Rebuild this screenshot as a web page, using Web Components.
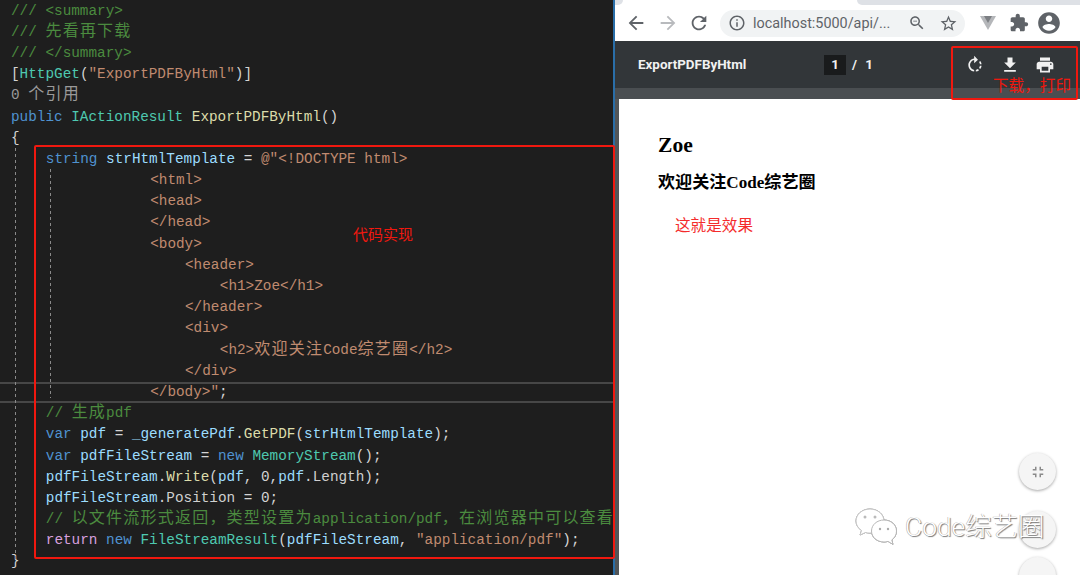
<!DOCTYPE html>
<html lang="zh">
<head>
<meta charset="utf-8">
<title>ExportPDFByHtml</title>
<style>
  html, body { margin: 0; height: 575px; overflow: hidden; background: #1e1e1e; }
</style>
</head>
<body>
<app-window>
  <code-editor slot="left">
    <code-line><c-t k="c">/// &lt;summary&gt;</c-t></code-line>
    <code-line><c-t k="c">/// <c-t k="z">先看再下载</c-t></c-t></code-line>
    <code-line><c-t k="c">/// &lt;/summary&gt;</c-t></code-line>
    <code-line>[<c-t k="t">HttpGet</c-t>(<c-t k="s">"ExportPDFByHtml"</c-t>)]</code-line>
    <code-line><c-t k="g">0 <c-t k="z">个引用</c-t></c-t></code-line>
    <code-line><c-t k="k">public</c-t> <c-t k="t">IActionResult</c-t> <c-t k="m">ExportPDFByHtml</c-t>()</code-line>
    <code-line>{</code-line>
    <code-line indent="4"><c-t k="k">string</c-t> <c-t k="v">strHtmlTemplate</c-t> = <c-t k="s">@"&lt;!DOCTYPE html&gt;</c-t></code-line>
    <code-line indent="16"><c-t k="s">&lt;html&gt;</c-t></code-line>
    <code-line indent="16"><c-t k="s">&lt;head&gt;</c-t></code-line>
    <code-line indent="16"><c-t k="s">&lt;/head&gt;</c-t></code-line>
    <code-line indent="16"><c-t k="s">&lt;body&gt;</c-t></code-line>
    <code-line indent="20"><c-t k="s">&lt;header&gt;</c-t></code-line>
    <code-line indent="24"><c-t k="s">&lt;h1&gt;Zoe&lt;/h1&gt;</c-t></code-line>
    <code-line indent="20"><c-t k="s">&lt;/header&gt;</c-t></code-line>
    <code-line indent="20"><c-t k="s">&lt;div&gt;</c-t></code-line>
    <code-line indent="24"><c-t k="s">&lt;h2&gt;<c-t k="z">欢迎关注</c-t>Code<c-t k="z">综艺圈</c-t>&lt;/h2&gt;</c-t></code-line>
    <code-line indent="20"><c-t k="s">&lt;/div&gt;</c-t></code-line>
    <code-line indent="16" current><c-t k="s">&lt;/body&gt;"</c-t>;</code-line>
    <code-line indent="4"><c-t k="c">// <c-t k="z">生成</c-t>pdf</c-t></code-line>
    <code-line indent="4"><c-t k="k">var</c-t> <c-t k="v">pdf</c-t> = <c-t k="v">_generatePdf</c-t>.<c-t k="m">GetPDF</c-t>(<c-t k="v">strHtmlTemplate</c-t>);</code-line>
    <code-line indent="4"><c-t k="k">var</c-t> <c-t k="v">pdfFileStream</c-t> = <c-t k="k">new</c-t> <c-t k="t">MemoryStream</c-t>();</code-line>
    <code-line indent="4"><c-t k="v">pdfFileStream</c-t>.<c-t k="m">Write</c-t>(<c-t k="v">pdf</c-t>, 0,<c-t k="v">pdf</c-t>.<c-t k="p">Length</c-t>);</code-line>
    <code-line indent="4"><c-t k="v">pdfFileStream</c-t>.<c-t k="p">Position</c-t> = 0;</code-line>
    <code-line indent="4"><c-t k="c">// <c-t k="z">以文件流形式返回，类型设置为</c-t>application/pdf<c-t k="z">，在浏览器中可以查看</c-t></c-t></code-line>
    <code-line indent="4"><c-t k="r">return</c-t> <c-t k="k">new</c-t> <c-t k="t">FileStreamResult</c-t>(<c-t k="v">pdfFileStream</c-t>, <c-t k="s">"application/pdf"</c-t>);</code-line>
    <code-line>}</code-line>
  </code-editor>

  <browser-pane slot="right">
    <browser-toolbar slot="chrome" url="localhost:5000/api/..."></browser-toolbar>
    <pdf-toolbar slot="bar" name="ExportPDFByHtml"></pdf-toolbar>
    <pdf-page slot="page">
      <span slot="h1">Zoe</span>
      <span slot="h2">欢迎关注Code综艺圈</span>
      <span slot="note">这就是效果</span>
    </pdf-page>
  </browser-pane>

  <red-box slot="over" style="left:34px;top:145px;width:581px;height:414px"></red-box>
  <red-note slot="over" style="left:353px;top:224px;font-size:15px">代码实现</red-note>
  <red-box slot="over" style="left:951px;top:46px;width:127px;height:54px"></red-box>
  <red-note slot="over" style="left:993px;top:74px;font-size:15.6px">下载，打印</red-note>
  <wechat-mark slot="over">Code综艺圈</wechat-mark>
</app-window>

<script>
const icons = {
  back: 'M20 11H7.83l5.59-5.59L12 4l-8 8 8 8 1.41-1.41L7.83 13H20v-2z',
  reload: 'M17.65 6.35C16.2 4.9 14.21 4 12 4c-4.42 0-7.99 3.58-7.99 8s3.57 8 7.99 8c3.73 0 6.84-2.55 7.73-6h-2.08c-.82 2.33-3.04 4-5.65 4-3.31 0-6-2.69-6-6s2.69-6 6-6c1.66 0 3.14.69 4.22 1.78L13 11h7V4l-2.35 2.35z',
  info: 'M11 7h2v2h-2zm0 4h2v6h-2zm1-9C6.48 2 2 6.48 2 12s4.48 10 10 10 10-4.48 10-10S17.52 2 12 2zm0 18c-4.41 0-8-3.59-8-8s3.59-8 8-8 8 3.59 8 8-3.59 8-8 8z',
  zoomout: 'M15.5 14h-.79l-.28-.27C15.41 12.59 16 11.11 16 9.5 16 5.91 13.09 3 9.5 3S3 5.91 3 9.5 5.91 16 9.5 16c1.61 0 3.09-.59 4.23-1.57l.27.28v.79l5 4.99L20.49 19l-4.99-5zm-6 0C7.01 14 5 11.99 5 9.5S7.01 5 9.5 5 14 7.01 14 9.5 11.99 14 9.5 14zM7 9h5v1H7z',
  star: 'M22 9.24l-7.19-.62L12 2 9.19 8.63 2 9.24l5.46 4.73L5.82 21 12 17.27 18.18 21l-1.63-7.03L22 9.24zM12 15.4l-3.76 2.27 1-4.28-3.32-2.88 4.38-.38L12 6.1l1.71 4.04 4.38.38-3.32 2.88 1 4.28L12 15.4z',
  puzzle: 'M20.5 11H19V7c0-1.1-.9-2-2-2h-4V3.5C13 2.12 11.88 1 10.5 1S8 2.12 8 3.5V5H4c-1.1 0-1.99.9-1.99 2v3.8H3.5c1.49 0 2.7 1.21 2.7 2.7s-1.21 2.7-2.7 2.7H2V20c0 1.1.9 2 2 2h3.8v-1.5c0-1.49 1.21-2.7 2.7-2.7 1.49 0 2.7 1.21 2.7 2.7V22H17c1.1 0 2-.9 2-2v-4h1.5c1.38 0 2.5-1.12 2.5-2.5S21.88 11 20.5 11z',
  avatar: 'M12 2C6.48 2 2 6.48 2 12s4.48 10 10 10 10-4.48 10-10S17.52 2 12 2zm0 3c1.66 0 3 1.34 3 3s-1.34 3-3 3-3-1.34-3-3 1.34-3 3-3zm0 14.2c-2.5 0-4.71-1.28-6-3.22.03-1.99 4-3.08 6-3.08 1.99 0 5.97 1.09 6 3.08-1.29 1.94-3.5 3.22-6 3.22z',
  rotate: 'M15.55 5.55L11 1v3.07C7.06 4.56 4 7.92 4 12s3.05 7.44 7 7.93v-2.02c-2.84-.48-5-2.94-5-5.91s2.16-5.43 5-5.91V10l4.55-4.45zM19.93 11c-.17-1.39-.72-2.73-1.62-3.89l-1.42 1.42c.54.75.88 1.6 1.02 2.47h2.02zM13 17.9v2.02c1.39-.17 2.74-.71 3.9-1.61l-1.44-1.44c-.75.54-1.59.89-2.46 1.03zm3.89-2.42l1.42 1.41c.9-1.16 1.45-2.5 1.62-3.89h-2.02c-.14.87-.48 1.72-1.02 2.48z',
  download: 'M19 9h-4V3H9v6H5l7 7 7-7zM5 18v2h14v-2H5z',
  print: 'M19 8H5c-1.66 0-3 1.34-3 3v6h4v4h12v-4h4v-6c0-1.66-1.34-3-3-3zm-3 11H8v-5h8v5zm3-7c-.55 0-1-.45-1-1s.45-1 1-1 1 .45 1 1-.45 1-1 1zm-1-9H6v4h12V3z',
  shrink: 'M5 16h3v3h2v-5H5v2zm3-8H5v2h5V5H8v3zm6 11h2v-3h3v-2h-5v5zm2-11V5h-2v5h5V8h-3z',
  minus: 'M6 11h12v2H6z'
};

function icon(name, size, color, extra) {
  return `<svg width="${size}" height="${size}" viewBox="0 0 24 24" fill="${color}" style="display:block;flex:none;${extra || ''}"><path d="${icons[name]}"/></svg>`;
}

class AppWindow extends HTMLElement {
  constructor() {
    super();
    this.attachShadow({ mode: 'open' }).innerHTML = `
      <style>
        :host { display: flex; position: relative; width: 1080px; height: 575px; overflow: hidden; }
        ::slotted([slot=left]) { width: 613px; flex: none; }
        ::slotted([slot=right]) { flex: 1; }
      </style>
      <slot name="left"></slot><slot name="right"></slot><slot name="over"></slot>`;
  }
}

class CodeEditor extends HTMLElement {
  constructor() {
    super();
    this.attachShadow({ mode: 'open' }).innerHTML = `
      <style>
        :host { display: block; position: relative; box-sizing: border-box; height: 575px; padding-top: .6px;
                background: #1e1e1e; color: #d4d4d4;
                font: 14.35px "Liberation Mono", "Noto Sans CJK SC", monospace; overflow: hidden; }
        .guide { position: absolute; width: 1px;
                 background: repeating-linear-gradient(#8a8a8a 0 3px, transparent 3px 6px); }
        .a { left: 15px; top: 148px; height: 412px; }
        .b { left: 50px; top: 169px; height: 229px; }
      </style>
      <slot></slot>
      <div class="guide a"></div><div class="guide b"></div>`;
  }
}

// white-space: pre is inherited into these two shadow roots, so no whitespace between their nodes
class CodeLine extends HTMLElement {
  constructor() {
    super();
    this.attachShadow({ mode: 'open' }).innerHTML = `<style>
        :host { display: block; box-sizing: border-box; height: 21.2px; line-height: 21.2px;
                padding-left: 11px; white-space: pre; }
        :host([current]) { box-shadow: inset 0 2px #474747, inset 0 -2px #474747; }
        .in { display: inline-block; }
      </style><span class="in"></span><slot></slot>`;
  }
  connectedCallback() {
    const n = Number(this.getAttribute('indent') || 0);
    this.shadowRoot.querySelector('.in').style.width = (n * 8.7) + 'px';
  }
}

class CodeToken extends HTMLElement {
  constructor() {
    super();
    this.attachShadow({ mode: 'open' }).innerHTML = `<style>
        :host([k=c]) { color: #4b8b3f; }
        :host([k=s]) { color: #c08b70; }
        :host([k=t]) { color: #4ec9b0; }
        :host([k=k]) { color: #4f92d0; }
        :host([k=v]) { color: #9cdcfe; }
        :host([k=m]) { color: #dcdcaa; }
        :host([k=p]) { color: #d0d0d0; }
        :host([k=r]) { color: #d8a0df; }
        :host([k=g]) { color: #9a9a9a; }
        :host([k=z]) { font-family: "Noto Sans CJK SC", sans-serif; font-size: 16px; letter-spacing: 1.22px; line-height: 0; }
      </style><slot></slot>`;
  }
}

class BrowserPane extends HTMLElement {
  constructor() {
    super();
    this.attachShadow({ mode: 'open' }).innerHTML = `
      <style>
        :host { display: flex; flex-direction: column; height: 575px; box-sizing: border-box;
                border-left: 2px solid #2a6ea8; background: #525659; }
        .strip { height: 11px; background: #4a4e51; }
        ::slotted([slot=page]) { flex: 1; margin-left: 4px; }
      </style>
      <slot name="chrome"></slot>
      <slot name="bar"></slot>
      <div class="strip"></div>
      <slot name="page"></slot>`;
  }
}

class BrowserToolbar extends HTMLElement {
  constructor() {
    super();
    this.attachShadow({ mode: 'open' });
  }
  connectedCallback() {
    this.shadowRoot.innerHTML = `
      <style>
        :host { display: block; background: #fff; font: 14.4px Roboto, sans-serif; color: #5f6368; }
        .tabs { display: flex; height: 5px; background: #fff; }
        .corner { width: 8px; background: #dee1e6; border-bottom-right-radius: 6px; }
        .tab { width: 234px; }
        .rest { flex: 1; background: #dee1e6; border-bottom-left-radius: 6px; }
        .row { display: flex; align-items: center; height: 36px; padding-left: 11px; gap: 12px; }
        .pill { display: flex; align-items: center; box-sizing: border-box; width: 245px; height: 27px;
                margin-left: -2px; padding-left: 8px; border-radius: 14px; background: #f1f3f4; }
        .url { margin-left: 7px; width: 150px; white-space: nowrap; }
        .v { margin-left: 3px; }
      </style>
      <div class="tabs"><div class="corner"></div><div class="tab"></div><div class="rest"></div></div>
      <div class="row">
        ${icon('back', 22, '#5f6368', 'margin-left:-1px')}
        ${icon('back', 22, '#b8babd', 'transform:scaleX(-1);margin-left:-2px')}
        ${icon('reload', 22, '#5f6368', 'margin-left:-3px')}
        <div class="pill">
          ${icon('info', 18, '#5f6368')}
          <span class="url">${this.getAttribute('url')}</span>
          ${icon('zoomout', 18, '#5f6368', 'margin-left:5px')}
          ${icon('star', 19, '#5f6368', 'margin-left:13px')}
        </div>
        <svg class="v" width="16" height="14" viewBox="0 0 16 14" style="display:block;flex:none">
          <path d="M0 0h16L8 14z" fill="#b5b7ba"/><path d="M4 0h8L8 7z" fill="#7c7f83"/>
        </svg>
        ${icon('puzzle', 20, '#5f6368', 'margin-left:1px')}
        ${icon('avatar', 26, '#5f6368', 'margin-left:-5px')}
      </div>`;
  }
}

class PdfToolbar extends HTMLElement {
  constructor() {
    super();
    this.attachShadow({ mode: 'open' });
  }
  connectedCallback() {
    this.shadowRoot.innerHTML = `
      <style>
        :host { display: flex; align-items: center; height: 47px; box-sizing: border-box; padding-left: 23px;
                background: #323639; color: #f1f1f1; font: 700 13.4px Roboto, sans-serif; }
        .name { width: 186px; }
        .num { width: 22px; height: 20px; line-height: 20px; text-align: center; background: #191b1c; }
        .of { margin-left: 6px; word-spacing: 5px; }
        .tools { display: flex; gap: 15px; margin-left: auto; margin-right: 25px; }
      </style>
      <span class="name">${this.getAttribute('name')}</span>
      <span class="num">1</span>
      <span class="of">/ 1</span>
      <span class="tools">
        ${icon('rotate', 20, '#f1f1f1')}
        ${icon('download', 20, '#f1f1f1')}
        ${icon('print', 20, '#f1f1f1')}
      </span>`;
  }
}

class PdfPage extends HTMLElement {
  constructor() {
    super();
    this.attachShadow({ mode: 'open' }).innerHTML = `
      <style>
        :host { display: block; position: relative; background: #fff; color: #000; padding: 33px 0 0 39px;
                font-family: "Liberation Serif", "Noto Sans CJK SC", serif; }
        .h1 { font-size: 21.6px; font-weight: 700; line-height: 26px; }
        .h2 { margin-top: 13px; font-size: 17.1px; font-weight: 700; line-height: 24px; }
        .note { margin: 17px 0 0 17px; font: 15.6px/24px "Noto Sans CJK SC", sans-serif; color: #f42c2c; }
        .fabs { position: absolute; left: 400px; top: 354px; display: flex; flex-direction: column; }
        .fab { display: flex; align-items: center; justify-content: center; width: 37px; height: 37px;
               border-radius: 50%; background: #f5f5f5; box-shadow: 0 1px 3px rgba(0,0,0,.35); }
        .f2 { margin-top: 21px; }
        .f3 { margin-top: 9px; }
      </style>
      <div class="h1"><slot name="h1"></slot></div>
      <div class="h2"><slot name="h2"></slot></div>
      <div class="note"><slot name="note"></slot></div>
      <div class="fabs">
        <div class="fab">${icon('shrink', 18, '#8a8a8a')}</div>
        <div class="fab f2"></div>
        <div class="fab f3">${icon('minus', 18, '#8a8a8a')}</div>
      </div>`;
  }
}

class RedBox extends HTMLElement {
  constructor() {
    super();
    this.attachShadow({ mode: 'open' }).innerHTML = `
      <style>
        :host { display: block; position: absolute; box-sizing: border-box; border: 2.5px solid #f0180f; border-radius: 2px; }
      </style>`;
  }
}

class RedNote extends HTMLElement {
  constructor() {
    super();
    this.attachShadow({ mode: 'open' }).innerHTML = `
      <style>
        :host { display: block; position: absolute; color: #f0180f; line-height: 20px; white-space: nowrap;
                font-family: "Noto Sans CJK SC", sans-serif; }
      </style>
      <slot></slot>`;
  }
}

class WechatMark extends HTMLElement {
  constructor() {
    super();
    this.attachShadow({ mode: 'open' }).innerHTML = `
      <style>
        :host { display: flex; align-items: center; gap: 8px; position: absolute; left: 855px; top: 507px; height: 40px;
                font: 300 26.4px Roboto, "Noto Sans CJK SC", sans-serif; color: #fff; white-space: nowrap;
                text-shadow: 1px 1px 1px #777, -.5px 0 .5px #aaa; }
        svg { display: block; filter: drop-shadow(.5px .5px .5px #888); }
        span { margin-top: -5px; }
      </style>
      <svg width="42" height="38" viewBox="0 0 42 38">
        <path d="M15 1C7 1 1 6.500 1 13c0 4 2.200 7.200 5.500 9.500L5 27l5.500-2.500c1.500.4 3 .6 4.500.6 8 0 14-5.500 14-12S23 1 15 1z" fill="#fff" stroke="#c8c8c8"/>
        <path d="M29 12c-7 0-12.500 4.800-12.500 11S22 34 29 34c1.300 0 2.700-.2 4-.6l5 3-1.200-4.500c2.800-2 4.700-5 4.700-8.900 0-6.200-5.500-11-12.500-11z" fill="#fff" stroke="#b8b8b8"/>
        <circle cx="10" cy="9" r="1.500" fill="#bbb"/><circle cx="20" cy="9" r="1.500" fill="#bbb"/>
        <circle cx="25" cy="21" r="1.200" fill="#aaa"/><circle cx="33" cy="21" r="1.200" fill="#aaa"/>
      </svg>
      <span><slot></slot></span>`;
  }
}

customElements.define('app-window', AppWindow);
customElements.define('code-editor', CodeEditor);
customElements.define('code-line', CodeLine);
customElements.define('c-t', CodeToken);
customElements.define('browser-pane', BrowserPane);
customElements.define('browser-toolbar', BrowserToolbar);
customElements.define('pdf-toolbar', PdfToolbar);
customElements.define('pdf-page', PdfPage);
customElements.define('red-box', RedBox);
customElements.define('red-note', RedNote);
customElements.define('wechat-mark', WechatMark);
</script>
</body>
</html>
